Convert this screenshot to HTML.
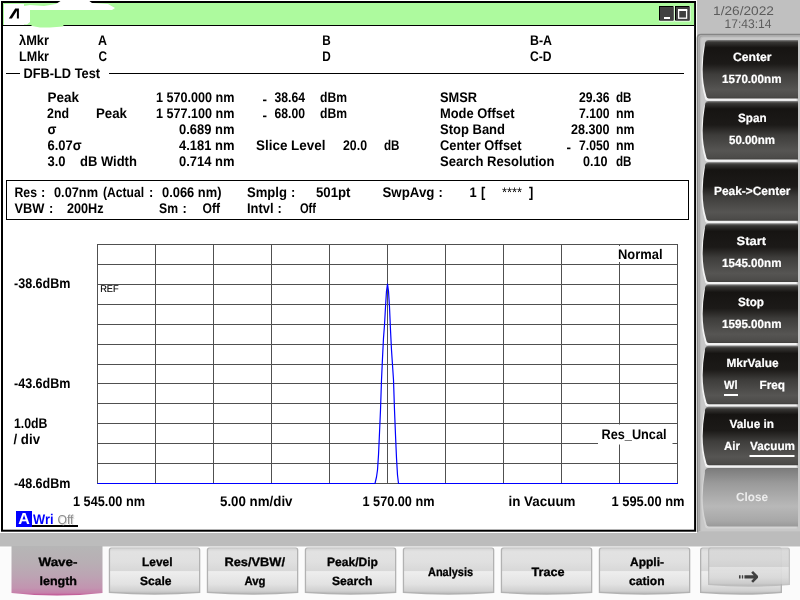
<!DOCTYPE html>
<html><head><meta charset="utf-8"><title>DFB-LD Test</title>
<style>
html,body{margin:0;padding:0;background:#fff;}
body{width:800px;height:600px;overflow:hidden;position:relative;font-family:"Liberation Sans",sans-serif;}
svg{position:absolute;left:0;top:0;display:block;will-change:transform;}
text{font-family:"Liberation Sans",sans-serif;text-rendering:geometricPrecision;}
.b{font-weight:bold;font-size:14px;fill:#000;}
.w{font-weight:bold;font-size:12px;fill:#fff;stroke:#fff;stroke-width:0.2px;}
.k{font-weight:bold;font-size:12px;fill:#000;stroke:#000;stroke-width:0.3px;}
.r{font-size:9.8px;fill:#000;stroke:#000;stroke-width:0.15px;}
.bn{font-size:14px;fill:#000;}
.d{font-size:12.5px;fill:#5c5c5c;}
.ia{font-weight:bold;font-size:16px;fill:#fff;}
.iw{font-weight:bold;font-size:14px;fill:#0000ff;}
.io{font-size:13px;fill:#8c8c8c;}
.io2{font-size:13px;fill:#e0e0e0;}
.cl{font-weight:bold;font-size:12px;fill:#ececec;}
.ar{font-family:"DejaVu Sans",sans-serif;font-weight:bold;font-size:26px;fill:#404040;}
</style></head><body>
<svg width="800" height="600" viewBox="0 0 800 600">
<defs>
<linearGradient id="gd" x1="0" y1="0" x2="0" y2="1">
<stop offset="0" stop-color="#5e5e5c"/><stop offset="0.03" stop-color="#363533"/><stop offset="0.12" stop-color="#161412"/><stop offset="0.4" stop-color="#1c1a18"/>
<stop offset="0.58" stop-color="#3e3d3b"/><stop offset="0.85" stop-color="#565553"/><stop offset="0.97" stop-color="#4c4b49"/><stop offset="1" stop-color="#403f3d"/>
</linearGradient>
<linearGradient id="gc" x1="0" y1="0" x2="0" y2="1">
<stop offset="0" stop-color="#7c7c7c"/><stop offset="0.25" stop-color="#9a9a9a"/><stop offset="0.65" stop-color="#b8b8b8"/>
<stop offset="0.9" stop-color="#a8a8a8"/><stop offset="1" stop-color="#9a9a9a"/>
</linearGradient>
<linearGradient id="gb" x1="0" y1="0" x2="0" y2="1">
<stop offset="0" stop-color="#d4d4d4"/><stop offset="0.08" stop-color="#e2e2e2"/><stop offset="0.3" stop-color="#e0e0e0"/><stop offset="0.5" stop-color="#d8d8d8"/>
<stop offset="0.52" stop-color="#eeeeee"/><stop offset="0.8" stop-color="#e2e2e2"/><stop offset="0.95" stop-color="#d0d0d0"/><stop offset="1" stop-color="#bcbcbc"/>
</linearGradient>
<linearGradient id="gp" x1="0" y1="0" x2="0" y2="1">
<stop offset="0" stop-color="#b6b6b6"/><stop offset="0.35" stop-color="#b8aeb4"/><stop offset="0.6" stop-color="#bca4b3"/>
<stop offset="0.85" stop-color="#c294b0"/><stop offset="0.95" stop-color="#c680aa"/><stop offset="1" stop-color="#c04c90"/>
</linearGradient>
</defs>

<rect x="0" y="0" width="800" height="600" fill="#fbfbfb"/>
<rect x="696" y="0" width="104" height="547" fill="#c0c0c0"/>
<rect x="0" y="532" width="800" height="15" fill="#bcbcbc"/>
<rect x="0" y="0" width="697" height="533" fill="#fff"/>
<rect x="2" y="2" width="693.1" height="528.7" fill="#fff" stroke="#000" stroke-width="2"/>
<rect x="3" y="3" width="691" height="22" fill="#adfa9e"/>
<rect x="3" y="25" width="691" height="1" fill="#000"/>
<rect x="4" y="4" width="20" height="21" fill="#fff"/>
<path d="M8.8,18.6 L15.2,8.6 L18.9,8.6 L18.9,18.6 L16.9,18.6 L16.9,10.8 L11.9,18.6 Z" fill="#000"/>
<path d="M24,6 L30,5 L44,6 L56,4 L62,0 L88,0 L92,3 L108,4 L115,8 L112,10 L30,10 L30,22 L27,24.5 L24,24.5 Z" fill="#fff"/>
<path d="M30,24 L64,24 L63,26.5 L50,27.5 L40,27.5 L32,26 Z" fill="#adfa9e"/>
<rect x="659" y="6" width="15.5" height="15.5" fill="#fff"/><rect x="659" y="6" width="14.5" height="14.5" fill="#000"/><rect x="660" y="7" width="13.5" height="13.5" fill="#404040"/>
<rect x="675" y="6" width="15.5" height="15.5" fill="#fff"/><rect x="675" y="6" width="14.5" height="14.5" fill="#000"/><rect x="676" y="7" width="13.5" height="13.5" fill="#404040"/>
<rect x="664" y="17" width="6" height="2" fill="#fff"/>
<rect x="678.6" y="10.2" width="8" height="8" fill="none" stroke="#fff" stroke-width="1.3"/><rect x="678" y="9" width="9.2" height="2" fill="#fff"/>
<text class="b" x="19.0" y="45.0" textLength="30.0" lengthAdjust="spacingAndGlyphs">λMkr</text>
<text class="b" x="98.0" y="45.0" textLength="9.0" lengthAdjust="spacingAndGlyphs">A</text>
<text class="b" x="322.3" y="45.0" textLength="8.5" lengthAdjust="spacingAndGlyphs">B</text>
<text class="b" x="530.0" y="45.0" textLength="22.0" lengthAdjust="spacingAndGlyphs">B-A</text>
<text class="b" x="19.0" y="61.0" textLength="30.0" lengthAdjust="spacingAndGlyphs">LMkr</text>
<text class="b" x="98.5" y="61.0" textLength="8.5" lengthAdjust="spacingAndGlyphs">C</text>
<text class="b" x="322.3" y="61.0" textLength="8.5" lengthAdjust="spacingAndGlyphs">D</text>
<text class="b" x="530.0" y="61.0" textLength="21.5" lengthAdjust="spacingAndGlyphs">C-D</text>
<rect x="6" y="73" width="14" height="1" fill="#000"/><rect x="109" y="73" width="575" height="1" fill="#000"/>
<text class="b" x="23.5" y="78.0" textLength="76.5" lengthAdjust="spacingAndGlyphs">DFB-LD Test</text>
<text class="b" x="47.5" y="102.0" textLength="31.5" lengthAdjust="spacingAndGlyphs">Peak</text>
<text class="b" x="47.0" y="118.0" textLength="22.0" lengthAdjust="spacingAndGlyphs">2nd</text>
<text class="b" x="96.0" y="118.0" textLength="31.0" lengthAdjust="spacingAndGlyphs">Peak</text>
<text class="b" x="47.5" y="134.0" textLength="8.9" lengthAdjust="spacingAndGlyphs">σ</text>
<text class="b" x="47.5" y="150.0" textLength="34.2" lengthAdjust="spacingAndGlyphs">6.07σ</text>
<text class="b" x="47.5" y="166.0" textLength="18.1" lengthAdjust="spacingAndGlyphs">3.0</text>
<text class="b" x="80.0" y="166.0" textLength="56.9" lengthAdjust="spacingAndGlyphs">dB Width</text>
<text class="b" x="156.0" y="102.0" textLength="78.5" lengthAdjust="spacingAndGlyphs">1 570.000 nm</text>
<text class="b" x="156.0" y="118.0" textLength="78.5" lengthAdjust="spacingAndGlyphs">1 577.100 nm</text>
<text class="b" x="179.0" y="134.0" textLength="55.5" lengthAdjust="spacingAndGlyphs">0.689 nm</text>
<text class="b" x="179.0" y="150.0" textLength="55.5" lengthAdjust="spacingAndGlyphs">4.181 nm</text>
<text class="b" x="179.0" y="166.0" textLength="55.5" lengthAdjust="spacingAndGlyphs">0.714 nm</text>
<text class="b" x="262.5" y="104.0" textLength="4.5" lengthAdjust="spacingAndGlyphs">-</text>
<text class="b" x="274.5" y="102.0" textLength="30.5" lengthAdjust="spacingAndGlyphs">38.64</text>
<text class="b" x="320.0" y="102.0" textLength="27.0" lengthAdjust="spacingAndGlyphs">dBm</text>
<text class="b" x="262.5" y="120.0" textLength="4.5" lengthAdjust="spacingAndGlyphs">-</text>
<text class="b" x="274.5" y="118.0" textLength="30.5" lengthAdjust="spacingAndGlyphs">68.00</text>
<text class="b" x="320.0" y="118.0" textLength="27.0" lengthAdjust="spacingAndGlyphs">dBm</text>
<text class="b" x="256.0" y="150.0" textLength="69.5" lengthAdjust="spacingAndGlyphs">Slice Level</text>
<text class="b" x="343.0" y="150.0" textLength="24.0" lengthAdjust="spacingAndGlyphs">20.0</text>
<text class="b" x="384.0" y="150.0" textLength="15.5" lengthAdjust="spacingAndGlyphs">dB</text>
<text class="b" x="440.0" y="102.0" textLength="37.0" lengthAdjust="spacingAndGlyphs">SMSR</text>
<text class="b" x="579.0" y="102.0" textLength="30.5" lengthAdjust="spacingAndGlyphs">29.36</text>
<text class="b" x="616.0" y="102.0" textLength="15.5" lengthAdjust="spacingAndGlyphs">dB</text>
<text class="b" x="440.0" y="118.0" textLength="74.5" lengthAdjust="spacingAndGlyphs">Mode Offset</text>
<text class="b" x="579.0" y="118.0" textLength="30.5" lengthAdjust="spacingAndGlyphs">7.100</text>
<text class="b" x="616.0" y="118.0" textLength="18.5" lengthAdjust="spacingAndGlyphs">nm</text>
<text class="b" x="440.0" y="134.0" textLength="65.0" lengthAdjust="spacingAndGlyphs">Stop Band</text>
<text class="b" x="571.0" y="134.0" textLength="38.5" lengthAdjust="spacingAndGlyphs">28.300</text>
<text class="b" x="616.0" y="134.0" textLength="18.5" lengthAdjust="spacingAndGlyphs">nm</text>
<text class="b" x="440.0" y="150.0" textLength="81.5" lengthAdjust="spacingAndGlyphs">Center Offset</text>
<text class="b" x="566.5" y="152.0" textLength="4.5" lengthAdjust="spacingAndGlyphs">-</text>
<text class="b" x="579.0" y="150.0" textLength="30.5" lengthAdjust="spacingAndGlyphs">7.050</text>
<text class="b" x="616.0" y="150.0" textLength="18.5" lengthAdjust="spacingAndGlyphs">nm</text>
<text class="b" x="440.0" y="166.0" textLength="114.5" lengthAdjust="spacingAndGlyphs">Search Resolution</text>
<text class="b" x="583.0" y="166.0" textLength="24.5" lengthAdjust="spacingAndGlyphs">0.10</text>
<text class="b" x="616.0" y="166.0" textLength="15.5" lengthAdjust="spacingAndGlyphs">dB</text>
<rect x="6.5" y="180.5" width="682" height="39" fill="none" stroke="#000" stroke-width="1"/>
<text class="b" x="14.5" y="197.0" textLength="22.5" lengthAdjust="spacingAndGlyphs">Res</text>
<text class="b" x="41.0" y="197.0" textLength="4.3" lengthAdjust="spacingAndGlyphs">:</text>
<text class="b" x="54.0" y="197.0" textLength="44.0" lengthAdjust="spacingAndGlyphs">0.07nm</text>
<text class="b" x="103.0" y="197.0" textLength="41.0" lengthAdjust="spacingAndGlyphs">(Actual</text>
<text class="b" x="149.0" y="197.0" textLength="4.3" lengthAdjust="spacingAndGlyphs">:</text>
<text class="b" x="162.0" y="197.0" textLength="59.5" lengthAdjust="spacingAndGlyphs">0.066 nm)</text>
<text class="b" x="247.0" y="197.0" textLength="40.0" lengthAdjust="spacingAndGlyphs">Smplg</text>
<text class="b" x="291.0" y="197.0" textLength="4.3" lengthAdjust="spacingAndGlyphs">:</text>
<text class="b" x="316.0" y="197.0" textLength="34.5" lengthAdjust="spacingAndGlyphs">501pt</text>
<text class="b" x="382.5" y="197.0" textLength="52.0" lengthAdjust="spacingAndGlyphs">SwpAvg</text>
<text class="b" x="438.5" y="197.0" textLength="4.3" lengthAdjust="spacingAndGlyphs">:</text>
<text class="b" x="469.5" y="197.0" textLength="7.2" lengthAdjust="spacingAndGlyphs">1</text>
<text class="b" x="481.0" y="197.0" textLength="4.3" lengthAdjust="spacingAndGlyphs">[</text>
<text class="bn" x="502.0" y="196.5" textLength="20.0" lengthAdjust="spacingAndGlyphs">****</text>
<text class="b" x="529.0" y="197.0" textLength="4.3" lengthAdjust="spacingAndGlyphs">]</text>
<text class="b" x="14.5" y="213.0" textLength="30.0" lengthAdjust="spacingAndGlyphs">VBW</text>
<text class="b" x="49.0" y="213.0" textLength="4.3" lengthAdjust="spacingAndGlyphs">:</text>
<text class="b" x="67.0" y="213.0" textLength="36.5" lengthAdjust="spacingAndGlyphs">200Hz</text>
<text class="b" x="159.0" y="213.0" textLength="19.0" lengthAdjust="spacingAndGlyphs">Sm</text>
<text class="b" x="182.5" y="213.0" textLength="4.3" lengthAdjust="spacingAndGlyphs">:</text>
<text class="b" x="202.5" y="213.0" textLength="17.5" lengthAdjust="spacingAndGlyphs">Off</text>
<text class="b" x="247.0" y="213.0" textLength="26.5" lengthAdjust="spacingAndGlyphs">Intvl</text>
<text class="b" x="277.5" y="213.0" textLength="4.3" lengthAdjust="spacingAndGlyphs">:</text>
<text class="b" x="300.0" y="213.0" textLength="16.0" lengthAdjust="spacingAndGlyphs">Off</text>
<path d="M97.5,244 V484 M155.5,244 V484 M213.5,244 V484 M271.5,244 V484 M329.5,244 V484 M387.5,244 V484 M445.5,244 V484 M503.5,244 V484 M561.5,244 V484 M619.5,244 V484 M677.5,244 V484 M97,244.5 H678 M97,264.5 H678 M97,284.5 H678 M97,304.5 H678 M97,324.5 H678 M97,344.5 H678 M97,364.5 H678 M97,383.5 H678 M97,403.5 H678 M97,423.5 H678 M97,443.5 H678 M97,463.5 H678 M97,483.5 H678" stroke="#505050" stroke-width="1" fill="none" shape-rendering="crispEdges"/>
<rect x="616" y="246" width="48" height="16" fill="#fff"/>
<text class="b" x="618.0" y="259.0" textLength="44.5" lengthAdjust="spacingAndGlyphs">Normal</text>
<rect x="598" y="424.5" width="74.5" height="20" fill="#fff"/>
<text class="b" x="601.5" y="439.0" textLength="65.0" lengthAdjust="spacingAndGlyphs">Res_Uncal</text>
<text class="r" x="100.2" y="292.0" textLength="18.4" lengthAdjust="spacingAndGlyphs">REF</text>
<polyline points="97.5,483.5 375.0,483.5 376.5,477.0 377.5,470.0 378.5,455.0 379.5,433.0 380.5,410.0 381.5,380.0 382.5,358.0 383.5,338.0 384.5,325.0 385.5,307.0 386.5,291.0 387.5,284.0 388.5,291.0 389.5,307.0 390.5,330.0 391.5,350.0 392.5,365.0 393.5,380.0 394.5,410.0 395.5,435.0 396.5,458.0 397.5,475.0 398.5,483.5 678.0,483.5" fill="none" stroke="#0000ff" stroke-width="1.2" stroke-linejoin="round"/>
<text class="b" x="14.0" y="288.0" textLength="56.5" lengthAdjust="spacingAndGlyphs">-38.6dBm</text>
<text class="b" x="14.0" y="388.0" textLength="56.5" lengthAdjust="spacingAndGlyphs">-43.6dBm</text>
<text class="b" x="14.0" y="488.0" textLength="56.5" lengthAdjust="spacingAndGlyphs">-48.6dBm</text>
<text class="b" x="14.0" y="428.0" textLength="33.5" lengthAdjust="spacingAndGlyphs">1.0dB</text>
<text class="b" x="13.5" y="444.0" textLength="26.5" lengthAdjust="spacingAndGlyphs">/ div</text>
<text class="b" x="73.0" y="506.0" textLength="72.0" lengthAdjust="spacingAndGlyphs">1 545.00 nm</text>
<text class="b" x="220.0" y="506.0" textLength="72.5" lengthAdjust="spacingAndGlyphs">5.00 nm/div</text>
<text class="b" x="362.5" y="506.0" textLength="72.0" lengthAdjust="spacingAndGlyphs">1 570.00 nm</text>
<text class="b" x="508.5" y="506.0" textLength="67.0" lengthAdjust="spacingAndGlyphs">in Vacuum</text>
<text class="b" x="611.5" y="506.0" textLength="73.0" lengthAdjust="spacingAndGlyphs">1 595.00 nm</text>
<rect x="16" y="511" width="16" height="16" fill="#0000ff"/>
<rect x="32" y="525" width="46" height="2" fill="#000"/>
<text class="ia" x="18.2" y="523.5" textLength="11.6" lengthAdjust="spacingAndGlyphs">A</text>
<text class="iw" x="33.0" y="524.0" textLength="20.5" lengthAdjust="spacingAndGlyphs">Wri</text>
<text class="io2" x="58.5" y="525.0" textLength="16.0" lengthAdjust="spacingAndGlyphs">Off</text>
<text class="io" x="57.5" y="524.0" textLength="16.0" lengthAdjust="spacingAndGlyphs">Off</text>
<rect x="696" y="0" width="1" height="533" fill="#fff"/>
<path d="M697.5,532 V38 Q697.5,34.5 701,34.5 H800" fill="none" stroke="#858585" stroke-width="1.6"/>
<path d="M698.6,531 V39 Q698.6,35.6 702,35.6 H800 V531 H698.6 Z" fill="#a6a6a6"/>
<path d="M700,531 V39.5 Q700,36.6 703,36.6 H800 V531 H700 Z" fill="#bcbcbc"/>
<path d="M701.2,531 V40 Q701.2,37.6 704,37.6 H800 V531 H701.2 Z" fill="#c8c8c8"/>
<text class="d" x="713.0" y="14.5" textLength="61.0" lengthAdjust="spacingAndGlyphs">1/26/2022</text>
<text class="d" x="724.5" y="27.5" textLength="47.0" lengthAdjust="spacingAndGlyphs">17:43:14</text>
<path d="M708.5,40.8 H798 V98.5 H709 Q706.6,98.5 706.2,95.5 Q699.8,74.8 705,43.8 Q705.6,40.8 708.5,40.8 Z" fill="#787878" transform="translate(0,-0.8)"/>
<path d="M708.5,40.8 H798 V98.5 H709 Q706.6,98.5 706.2,95.5 Q699.8,74.8 705,43.8 Q705.6,40.8 708.5,40.8 Z" fill="#f2f2f2" transform="translate(-1.3,2.2)"/>
<path d="M708.5,40.8 H798 V98.5 H709 Q706.6,98.5 706.2,95.5 Q699.8,74.8 705,43.8 Q705.6,40.8 708.5,40.8 Z" fill="url(#gd)"/>
<path d="M708.5,101.9 H798 V159.6 H709 Q706.6,159.6 706.2,156.6 Q699.8,135.9 705,104.9 Q705.6,101.9 708.5,101.9 Z" fill="#787878" transform="translate(0,-0.8)"/>
<path d="M708.5,101.9 H798 V159.6 H709 Q706.6,159.6 706.2,156.6 Q699.8,135.9 705,104.9 Q705.6,101.9 708.5,101.9 Z" fill="#f2f2f2" transform="translate(-1.3,2.2)"/>
<path d="M708.5,101.9 H798 V159.6 H709 Q706.6,159.6 706.2,156.6 Q699.8,135.9 705,104.9 Q705.6,101.9 708.5,101.9 Z" fill="url(#gd)"/>
<path d="M708.5,163.1 H798 V220.8 H709 Q706.6,220.8 706.2,217.8 Q699.8,197.1 705,166.1 Q705.6,163.1 708.5,163.1 Z" fill="#787878" transform="translate(0,-0.8)"/>
<path d="M708.5,163.1 H798 V220.8 H709 Q706.6,220.8 706.2,217.8 Q699.8,197.1 705,166.1 Q705.6,163.1 708.5,163.1 Z" fill="#f2f2f2" transform="translate(-1.3,2.2)"/>
<path d="M708.5,163.1 H798 V220.8 H709 Q706.6,220.8 706.2,217.8 Q699.8,197.1 705,166.1 Q705.6,163.1 708.5,163.1 Z" fill="url(#gd)"/>
<path d="M708.5,224.2 H798 V281.9 H709 Q706.6,281.9 706.2,278.9 Q699.8,258.2 705,227.2 Q705.6,224.2 708.5,224.2 Z" fill="#787878" transform="translate(0,-0.8)"/>
<path d="M708.5,224.2 H798 V281.9 H709 Q706.6,281.9 706.2,278.9 Q699.8,258.2 705,227.2 Q705.6,224.2 708.5,224.2 Z" fill="#f2f2f2" transform="translate(-1.3,2.2)"/>
<path d="M708.5,224.2 H798 V281.9 H709 Q706.6,281.9 706.2,278.9 Q699.8,258.2 705,227.2 Q705.6,224.2 708.5,224.2 Z" fill="url(#gd)"/>
<path d="M708.5,285.3 H798 V343.0 H709 Q706.6,343.0 706.2,340.0 Q699.8,319.3 705,288.3 Q705.6,285.3 708.5,285.3 Z" fill="#787878" transform="translate(0,-0.8)"/>
<path d="M708.5,285.3 H798 V343.0 H709 Q706.6,343.0 706.2,340.0 Q699.8,319.3 705,288.3 Q705.6,285.3 708.5,285.3 Z" fill="#f2f2f2" transform="translate(-1.3,2.2)"/>
<path d="M708.5,285.3 H798 V343.0 H709 Q706.6,343.0 706.2,340.0 Q699.8,319.3 705,288.3 Q705.6,285.3 708.5,285.3 Z" fill="url(#gd)"/>
<path d="M708.5,346.5 H798 V404.2 H709 Q706.6,404.2 706.2,401.2 Q699.8,380.5 705,349.5 Q705.6,346.5 708.5,346.5 Z" fill="#787878" transform="translate(0,-0.8)"/>
<path d="M708.5,346.5 H798 V404.2 H709 Q706.6,404.2 706.2,401.2 Q699.8,380.5 705,349.5 Q705.6,346.5 708.5,346.5 Z" fill="#f2f2f2" transform="translate(-1.3,2.2)"/>
<path d="M708.5,346.5 H798 V404.2 H709 Q706.6,404.2 706.2,401.2 Q699.8,380.5 705,349.5 Q705.6,346.5 708.5,346.5 Z" fill="url(#gd)"/>
<path d="M708.5,407.6 H798 V465.3 H709 Q706.6,465.3 706.2,462.3 Q699.8,441.6 705,410.6 Q705.6,407.6 708.5,407.6 Z" fill="#787878" transform="translate(0,-0.8)"/>
<path d="M708.5,407.6 H798 V465.3 H709 Q706.6,465.3 706.2,462.3 Q699.8,441.6 705,410.6 Q705.6,407.6 708.5,407.6 Z" fill="#f2f2f2" transform="translate(-1.3,2.2)"/>
<path d="M708.5,407.6 H798 V465.3 H709 Q706.6,465.3 706.2,462.3 Q699.8,441.6 705,410.6 Q705.6,407.6 708.5,407.6 Z" fill="url(#gd)"/>
<path d="M708.5,468.7 H798 V526.4 H709 Q706.6,526.4 706.2,523.4 Q699.8,502.7 705,471.7 Q705.6,468.7 708.5,468.7 Z" fill="#787878" transform="translate(0,-0.8)"/>
<path d="M708.5,468.7 H798 V526.4 H709 Q706.6,526.4 706.2,523.4 Q699.8,502.7 705,471.7 Q705.6,468.7 708.5,468.7 Z" fill="#d4d4d4" transform="translate(-1.3,2.2)"/>
<path d="M708.5,468.7 H798 V526.4 H709 Q706.6,526.4 706.2,523.4 Q699.8,502.7 705,471.7 Q705.6,468.7 708.5,468.7 Z" fill="url(#gc)"/>
<text class="w" x="733.0" y="61.2" textLength="38.5" lengthAdjust="spacingAndGlyphs">Center</text>
<text class="w" x="722.0" y="83.3" textLength="59.5" lengthAdjust="spacingAndGlyphs">1570.00nm</text>
<text class="w" x="738.0" y="122.3" textLength="28.5" lengthAdjust="spacingAndGlyphs">Span</text>
<text class="w" x="729.0" y="144.4" textLength="46.0" lengthAdjust="spacingAndGlyphs">50.00nm</text>
<text class="w" x="714.0" y="195.3" textLength="76.5" lengthAdjust="spacingAndGlyphs">Peak-&gt;Center</text>
<text class="w" x="736.5" y="244.6" textLength="29.5" lengthAdjust="spacingAndGlyphs">Start</text>
<text class="w" x="722.0" y="266.7" textLength="59.5" lengthAdjust="spacingAndGlyphs">1545.00nm</text>
<text class="w" x="738.0" y="305.7" textLength="26.0" lengthAdjust="spacingAndGlyphs">Stop</text>
<text class="w" x="722.0" y="327.8" textLength="59.5" lengthAdjust="spacingAndGlyphs">1595.00nm</text>
<text class="w" x="726.5" y="366.9" textLength="52.0" lengthAdjust="spacingAndGlyphs">MkrValue</text>
<text class="w" x="724.0" y="389.0" textLength="13.5" lengthAdjust="spacingAndGlyphs">Wl</text>
<text class="w" x="759.5" y="389.0" textLength="25.5" lengthAdjust="spacingAndGlyphs">Freq</text>
<rect x="724" y="394" width="14" height="2" fill="#fff"/>
<text class="w" x="729.5" y="428.0" textLength="44.5" lengthAdjust="spacingAndGlyphs">Value in</text>
<text class="w" x="724.0" y="450.1" textLength="16.0" lengthAdjust="spacingAndGlyphs">Air</text>
<text class="w" x="750.0" y="450.1" textLength="45.0" lengthAdjust="spacingAndGlyphs">Vacuum</text>
<rect x="749.5" y="455" width="45" height="2" fill="#fff"/>
<text class="cl" x="736.0" y="500.5" textLength="32.0" lengthAdjust="spacingAndGlyphs">Close</text>
<rect x="0" y="546.5" width="800" height="1" fill="#fff"/>
<path d="M11.5,546 H102.5 V593 Q57,598 11.5,593 Z" fill="url(#gp)"/>
<path d="M108.8,550.1 Q108.8,547.6 111.3,547.6 H197.8 Q200.3,547.6 200.3,550.1 V593.0 Q154.6,596.4 108.8,593.0 Z" fill="#b2b2b2"/>
<path d="M110.1,550.1 Q110.1,548.2 111.8,548.2 H197.3 Q199.0,548.2 199.0,550.1 V591.8 Q154.6,594.6 110.1,591.8 Z" fill="url(#gb)"/>
<path d="M206.8,550.1 Q206.8,547.6 209.3,547.6 H295.8 Q298.3,547.6 298.3,550.1 V593.0 Q252.6,596.4 206.8,593.0 Z" fill="#b2b2b2"/>
<path d="M208.1,550.1 Q208.1,548.2 209.8,548.2 H295.3 Q297.0,548.2 297.0,550.1 V591.8 Q252.6,594.6 208.1,591.8 Z" fill="url(#gb)"/>
<path d="M304.8,550.1 Q304.8,547.6 307.3,547.6 H393.8 Q396.3,547.6 396.3,550.1 V593.0 Q350.6,596.4 304.8,593.0 Z" fill="#b2b2b2"/>
<path d="M306.1,550.1 Q306.1,548.2 307.8,548.2 H393.3 Q395.0,548.2 395.0,550.1 V591.8 Q350.6,594.6 306.1,591.8 Z" fill="url(#gb)"/>
<path d="M402.8,550.1 Q402.8,547.6 405.3,547.6 H491.8 Q494.3,547.6 494.3,550.1 V593.0 Q448.6,596.4 402.8,593.0 Z" fill="#b2b2b2"/>
<path d="M404.1,550.1 Q404.1,548.2 405.8,548.2 H491.3 Q493.0,548.2 493.0,550.1 V591.8 Q448.6,594.6 404.1,591.8 Z" fill="url(#gb)"/>
<path d="M500.8,550.1 Q500.8,547.6 503.3,547.6 H589.8 Q592.3,547.6 592.3,550.1 V593.0 Q546.5,596.4 500.8,593.0 Z" fill="#b2b2b2"/>
<path d="M502.1,550.1 Q502.1,548.2 503.8,548.2 H589.3 Q591.0,548.2 591.0,550.1 V591.8 Q546.5,594.6 502.1,591.8 Z" fill="url(#gb)"/>
<path d="M598.8,550.1 Q598.8,547.6 601.3,547.6 H687.8 Q690.3,547.6 690.3,550.1 V593.0 Q644.5,596.4 598.8,593.0 Z" fill="#b2b2b2"/>
<path d="M600.1,550.1 Q600.1,548.2 601.8,548.2 H687.3 Q689.0,548.2 689.0,550.1 V591.8 Q644.5,594.6 600.1,591.8 Z" fill="url(#gb)"/>
<path d="M700.0,550.1 Q700.0,547.6 702.5,547.6 H779.5 Q782.0,547.6 782.0,550.1 V593.0 Q741.0,596.4 700.0,593.0 Z" fill="#b2b2b2"/>
<path d="M701.3,550.1 Q701.3,548.2 703.0,548.2 H779.0 Q780.7,548.2 780.7,550.1 V591.8 Q741.0,594.6 701.3,591.8 Z" fill="url(#gb)"/>
<path d="M708.0,550.1 Q708.0,547.6 710.5,547.6 H787.5 Q790.0,547.6 790.0,550.1 V585.0 Q749.0,588.4 708.0,585.0 Z" fill="#b2b2b2" opacity="0.75"/>
<path d="M709.3,550.1 Q709.3,548.2 711.0,548.2 H787.0 Q788.7,548.2 788.7,550.1 V583.8 Q749.0,586.6 709.3,583.8 Z" fill="url(#gb)" opacity="0.75"/>
<text class="k" x="38.5" y="565.5" textLength="39.0" lengthAdjust="spacingAndGlyphs">Wave-</text>
<text class="k" x="39.5" y="584.5" textLength="37.5" lengthAdjust="spacingAndGlyphs">length</text>
<text class="k" x="142.0" y="565.5" textLength="30.5" lengthAdjust="spacingAndGlyphs">Level</text>
<text class="k" x="140.0" y="584.5" textLength="31.5" lengthAdjust="spacingAndGlyphs">Scale</text>
<text class="k" x="224.5" y="565.5" textLength="60.5" lengthAdjust="spacingAndGlyphs">Res/VBW/</text>
<text class="k" x="244.5" y="584.5" textLength="21.0" lengthAdjust="spacingAndGlyphs">Avg</text>
<text class="k" x="327.0" y="565.5" textLength="51.0" lengthAdjust="spacingAndGlyphs">Peak/Dip</text>
<text class="k" x="332.0" y="584.5" textLength="40.5" lengthAdjust="spacingAndGlyphs">Search</text>
<text class="k" x="428.0" y="575.5" textLength="45.0" lengthAdjust="spacingAndGlyphs">Analysis</text>
<text class="k" x="531.5" y="575.5" textLength="33.0" lengthAdjust="spacingAndGlyphs">Trace</text>
<text class="k" x="630.0" y="565.5" textLength="34.0" lengthAdjust="spacingAndGlyphs">Appli-</text>
<text class="k" x="629.0" y="584.5" textLength="35.5" lengthAdjust="spacingAndGlyphs">cation</text>
<text class="ar" x="737.5" y="584.8">→</text>
<rect x="740.6" y="574" width="1.2" height="6" fill="#e6e6e6"/><rect x="743.2" y="574" width="1.2" height="6" fill="#e6e6e6"/>
</svg></body></html>
